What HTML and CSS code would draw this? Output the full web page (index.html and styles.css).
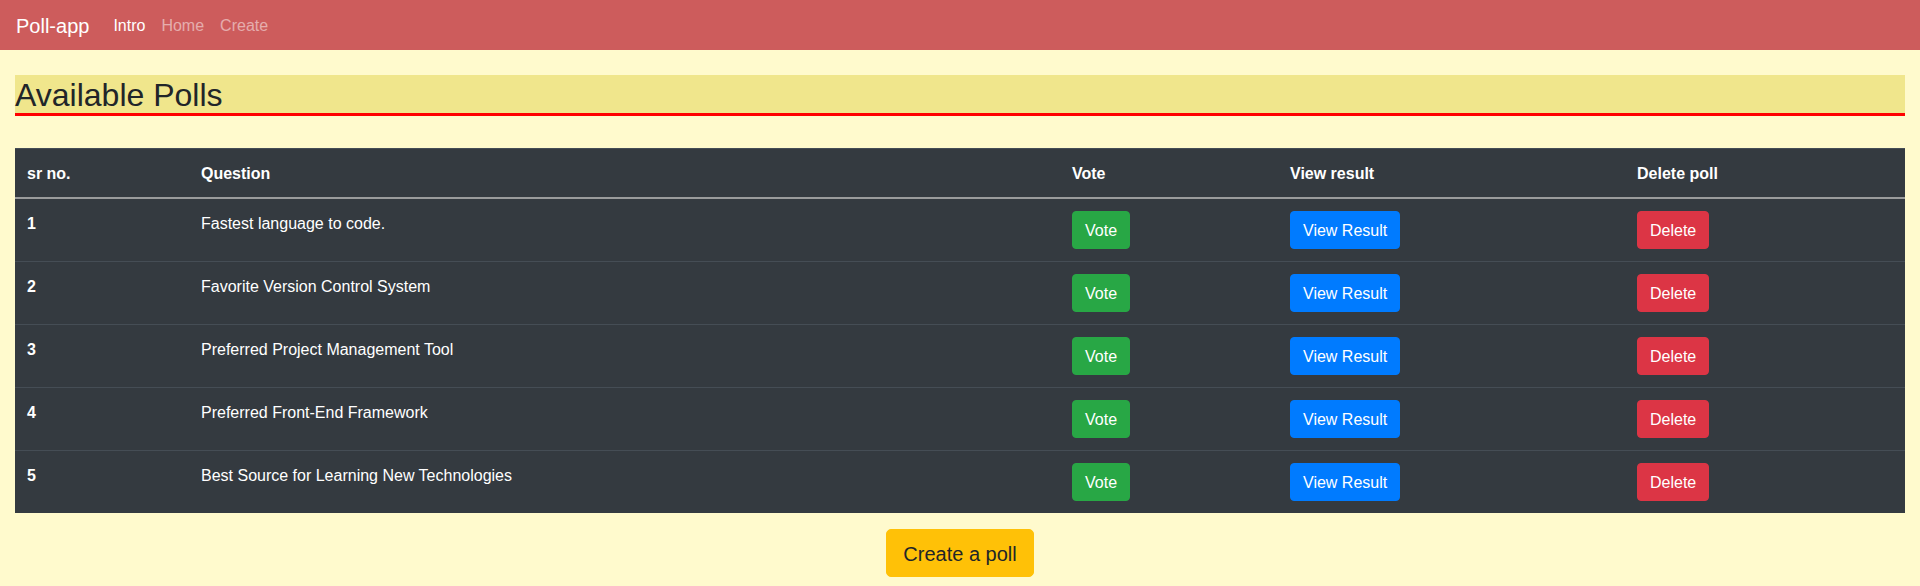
FILE: index.html
```html
<!DOCTYPE html>
<html lang="en">
<head>
<meta charset="utf-8">
<title>Poll-app</title>
<link rel="stylesheet" href="styles.css">
</head>
<body>
<nav class="navbar">
  <a class="brand" href="#">Poll-app</a>
  <ul class="nav">
    <li><a class="nav-link active" href="#">Intro</a></li>
    <li><a class="nav-link" href="#">Home</a></li>
    <li><a class="nav-link" href="#">Create</a></li>
  </ul>
</nav>
<main class="container">
  <h2 class="title">Available Polls</h2>
  <table class="polls">
    <thead>
      <tr>
        <th class="col-no">sr no.</th>
        <th class="col-q">Question</th>
        <th class="col-vote">Vote</th>
        <th class="col-view">View result</th>
        <th class="col-del">Delete poll</th>
      </tr>
    </thead>
    <tbody>
      <tr>
        <th>1</th>
        <td>Fastest language to code.</td>
        <td class="cell-btn"><button class="btn btn-green">Vote</button></td>
        <td class="cell-btn"><button class="btn btn-blue">View Result</button></td>
        <td class="cell-btn"><button class="btn btn-red">Delete</button></td>
      </tr>
      <tr>
        <th>2</th>
        <td>Favorite Version Control System</td>
        <td class="cell-btn"><button class="btn btn-green">Vote</button></td>
        <td class="cell-btn"><button class="btn btn-blue">View Result</button></td>
        <td class="cell-btn"><button class="btn btn-red">Delete</button></td>
      </tr>
      <tr>
        <th>3</th>
        <td>Preferred Project Management Tool</td>
        <td class="cell-btn"><button class="btn btn-green">Vote</button></td>
        <td class="cell-btn"><button class="btn btn-blue">View Result</button></td>
        <td class="cell-btn"><button class="btn btn-red">Delete</button></td>
      </tr>
      <tr>
        <th>4</th>
        <td>Preferred Front-End Framework</td>
        <td class="cell-btn"><button class="btn btn-green">Vote</button></td>
        <td class="cell-btn"><button class="btn btn-blue">View Result</button></td>
        <td class="cell-btn"><button class="btn btn-red">Delete</button></td>
      </tr>
      <tr>
        <th>5</th>
        <td>Best Source for Learning New Technologies</td>
        <td class="cell-btn"><button class="btn btn-green">Vote</button></td>
        <td class="cell-btn"><button class="btn btn-blue">View Result</button></td>
        <td class="cell-btn"><button class="btn btn-red">Delete</button></td>
      </tr>
    </tbody>
  </table>
  <div class="actions">
    <button class="btn btn-lg btn-yellow">Create a poll</button>
  </div>
</main>
</body>
</html>
```
FILE: styles.css
```css
* { box-sizing: border-box; }

html, body {
  margin: 0;
  padding: 0;
}

body {
  background: #fffacd;
  color: #212529;
  font-family: "Liberation Sans", Arial, sans-serif;
  font-size: 16px;
  line-height: 1.5;
}

.navbar {
  display: flex;
  align-items: center;
  height: 50px;
  padding: 5px 16px;
  background: #cd5c5c;
}

.brand {
  font-size: 20px;
  line-height: 30px;
  padding: 6px 0 4px;
  margin-right: 16px;
  color: #fff;
  text-decoration: none;
}

.nav {
  display: flex;
  list-style: none;
  margin: 0;
  padding: 0;
}

.nav-link {
  display: block;
  padding: 9px 8px 7px;
  color: rgba(255, 255, 255, 0.5);
  text-decoration: none;
}

.nav-link.active { color: #fff; }

.container {
  padding: 0 15px;
}

.title {
  margin: 25px 0 32px;
  padding-top: 2px;
  font-size: 32px;
  font-weight: 500;
  line-height: 36px;
  background: #f0e68c;
  border-bottom: 3px solid #ff0000;
}

.polls {
  width: 100%;
  table-layout: fixed;
  border-collapse: separate;
  border-spacing: 0;
  background: #343a40;
  color: #fff;
}

.polls th,
.polls td {
  padding: 13px 12px 11px;
  text-align: left;
  vertical-align: top;
  border-top: 1px solid #454d55;
}

.polls td.cell-btn {
  padding: 12px;
}

.polls thead th {
  border-top: 1px solid #454d55;
  border-bottom: 2px solid #9a9b9c;
  font-weight: bold;
}

.polls tbody tr:first-child th,
.polls tbody tr:first-child td {
  border-top: none;
}

.polls tbody th { font-weight: bold; }

.col-no { width: 174px; }
.col-q { width: 871px; }
.col-vote { width: 218px; }
.col-view { width: 347px; }
.col-del { width: 280px; }

.btn {
  display: inline-block;
  font-family: inherit;
  font-size: 16px;
  line-height: 24px;
  padding: 7px 12px 5px;
  border: 1px solid transparent;
  border-radius: 4px;
  color: #fff;
  cursor: pointer;
}

.btn-green { background: #28a745; border-color: #28a745; }
.btn-blue { background: #007bff; border-color: #007bff; }
.btn-red { background: #dc3545; border-color: #dc3545; }

.actions {
  display: flex;
  justify-content: center;
  padding-top: 16px;
}

.btn-lg {
  font-size: 20px;
  line-height: 30px;
  padding: 9px 16px 7px;
  border-radius: 5px;
}

.btn-yellow {
  background: #ffc107;
  border-color: #ffc107;
  color: #212529;
}
```
